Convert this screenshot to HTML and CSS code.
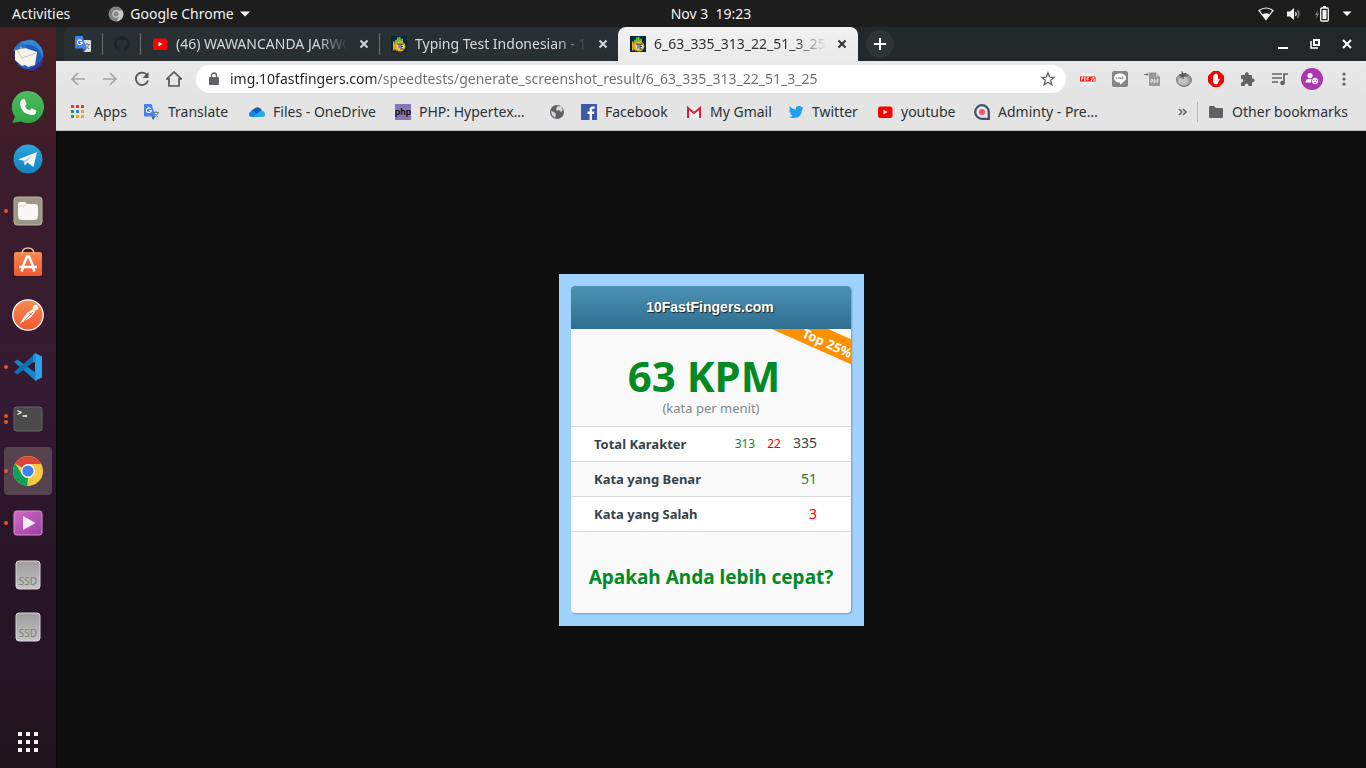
FILE: index.html
```html
<!DOCTYPE html>
<html lang="id">
<head>
<meta charset="utf-8">
<title>6_63_335_313_22_51_3_25</title>
<link rel="stylesheet" href="styles.css">
</head>
<body>
<svg class="defs" aria-hidden="true">
  <defs>
    <linearGradient id="gWa" x1="0" y1="0" x2="0" y2="1"><stop offset="0" stop-color="#4fbd60"/><stop offset="1" stop-color="#2fa547"/></linearGradient>
    <linearGradient id="gTg" x1="0" y1="0" x2="0" y2="1"><stop offset="0" stop-color="#2aa6df"/><stop offset="1" stop-color="#1580bd"/></linearGradient>
    <linearGradient id="gOr" x1="0" y1="0" x2="0" y2="1"><stop offset="0" stop-color="#f58a52"/><stop offset="1" stop-color="#f2582f"/></linearGradient>
    <linearGradient id="gVid" x1="0" y1="0" x2="1" y2="1"><stop offset="0" stop-color="#d06bc4"/><stop offset="1" stop-color="#9b3fa6"/></linearGradient>
    <linearGradient id="gSsd" x1="0" y1="0" x2="0" y2="1"><stop offset="0" stop-color="#9d9d9d"/><stop offset="1" stop-color="#c4c4c4"/></linearGradient>
    <symbol id="translate" viewBox="0 0 16 16">
      <path d="M6 4h9a1 1 0 0 1 1 1v10a1 1 0 0 1-1 1H9z" fill="#d9dde2"/>
      <path d="M9 8.500h6M12 7v1.500M14 8.500c-.5 2-2 3.500-4 4.500M10.500 9.500c.8 1.500 2 2.500 3.500 3.300" stroke="#72808a" fill="none"/>
      <path d="M1 0h6.500l3.800 12.500H1a1 1 0 0 1-1-1V1a1 1 0 0 1 1-1z" fill="#4382ee"/>
      <path d="M7.500 12.500h3.800L9 16z" fill="#2859b8"/>
      <path d="M6.700 4.800A2.400 2.400 0 1 0 7.200 6.500H5" stroke="#fff" stroke-width="1.200" fill="none"/>
    </symbol>
    <symbol id="youtube" viewBox="0 0 16 16"><rect x="1" y="2.500" width="14.500" height="11.500" rx="2.500" fill="#f00"/><path d="M6.500 5.800v4.600l4-2.300z" fill="#fff"/></symbol>
    <symbol id="fingers" viewBox="0 0 16 16">
      <path fill="#04283c" d="M0 0h16v16H0z"/>
      <path d="M4 8V4l1.500-.5L6 5V1.500L7.500 1 8 4V.8L9.500 1l.3 3 1-1.500 1.200.5V8z" fill="#71bd35"/>
      <path d="M2.800 5.500v9M3 11l2.500-4M3 10.500l3 4" stroke="#f4a60b" stroke-width="1.600" fill="none"/>
      <circle cx="9.300" cy="10.300" r="4.400" fill="#dce6dd" stroke="#eda412" stroke-width="1.500"/>
      <path d="M6 8h6.500M8 8v4.500M11.500 8.500H10V13h2.500M10 10.500h2" stroke="#34403c" stroke-width="1.100" fill="none"/>
    </symbol>
    <symbol id="close" viewBox="0 0 16 16"><path d="M4.500 4.500l7 7M11.500 4.500l-7 7" stroke="currentColor" stroke-width="2"/></symbol>
    <symbol id="ssd" viewBox="0 0 32 32"><rect x="4" y="2" width="24" height="28" rx="3" fill="url(#gSsd)" stroke="#d7d7d7"/><text x="16" y="26" text-anchor="middle" class="ssd-text">SSD</text></symbol>
  </defs>
</svg>

<header class="panel">
  <div class="panel-left">
    <button class="plain">Activities</button>
    <button class="plain app-menu">
      <svg width="16" height="16" viewBox="0 0 16 16"><circle cx="8" cy="8" r="7.500" fill="#858585"/><path d="M8 4.500h6.500A7.500 7.500 0 0 1 8.500 15.500L11.200 10z" fill="#c7c7c7"/><path d="M1.500 4.500L5 10l3.500 1.500" stroke="#666" fill="none"/><circle cx="8" cy="8" r="3.300" fill="#8b8b8b" stroke="#ddd"/></svg>
      <span>Google Chrome</span>
      <svg width="10" height="6" viewBox="0 0 10 6"><path d="M0 .5h10L5 5.500z" fill="#fff"/></svg>
    </button>
  </div>
  <button class="plain clock">Nov 3&nbsp; 19:23</button>
  <button class="plain tray" aria-label="System menu">
    <svg width="16" height="16" viewBox="0 0 16 16"><path d="M1 4.500Q8-.5 15 4.500L8 13.500z" fill="none" stroke="#f2f2f2" stroke-width="1.200"/><path d="M4.300 8.500Q8 6 11.700 8.500L8 14z" fill="#f2f2f2"/></svg>
    <svg width="16" height="16" viewBox="0 0 16 16"><path d="M1 5.500h3L8 2v12l-4-3.500H1z" fill="#f2f2f2"/><path d="M9.500 6q1.500 2 0 4" stroke="#f2f2f2" fill="none" stroke-width="1.300"/><path d="M11.500 4q3 4 0 8" stroke="#888" fill="none" stroke-width="1.300"/></svg>
    <svg width="16" height="16" viewBox="0 0 16 16"><path d="M4 4L1 9h2l-1 4 3-5.500H3z" fill="#888"/><rect x="6.700" y="2" width="7.600" height="13" rx="1" fill="none" stroke="#f2f2f2" stroke-width="1.300"/><path d="M9 0h3v2H9zM8.500 4h4v9h-4z" fill="#f2f2f2"/></svg>
    <svg width="10" height="6" viewBox="0 0 10 6"><path d="M.5.500h9L5 5z" fill="#fff"/></svg>
  </button>
</header>

<div class="desktop">
  <nav class="dock" aria-label="Dock">
    <button class="dock-item" aria-label="Thunderbird"><svg viewBox="0 0 32 32"><circle cx="17" cy="16" r="14.500" fill="#1d5fb8"/><path d="M1 12Q6 2 14 1.500 22-1 27 6q5 5 4 13l-4-8Q20 4 9 6z" fill="#3585d2"/><path d="M23 27q7-4 8.300-11Q32 27 22 31.500l-7-.5z" fill="#34349c"/><path d="M3 11l6-4 7 3 9 3-2 13-7 2-3-2-3 1-7-6z" fill="#f6f4ea"/><path d="M5 11l5 8 14-5" stroke="#c8c5b6" fill="none"/><path d="M1 12Q4 5 11 4l4 5-7 1z" fill="#2874c5"/><circle cx="9" cy="9" r="1.300" fill="#e4a12c"/></svg></button>
    <button class="dock-item" aria-label="WhatsApp"><svg viewBox="0 0 32 32"><path d="M16 0a16 16 0 1 1-7 30.400L.4 32 3 25.500A16 16 0 0 1 16 0z" fill="url(#gWa)"/><path d="M10 8.500l2.500-.5 2.200 5-1.800 2.200q1.500 3 4.800 4.300l2-2.200 4.700 2.300q-.2 4.500-4.500 4.500Q9 22.500 8 13q0-3 2-4.500z" fill="#fff"/></svg></button>
    <button class="dock-item" aria-label="Telegram"><svg viewBox="0 0 32 32"><circle cx="16" cy="16" r="14.500" fill="url(#gTg)"/><path d="M6 16.500L25 9l-3.500 15-6-4.500-3 3-.8-4.800z" fill="#f4f9fc"/><path d="M11.700 17.700L22 11.500l-8.500 8-1 3z" fill="#b3cfe2"/></svg></button>
    <button class="dock-item run" aria-label="Files"><svg viewBox="0 0 32 32"><rect x="2" y="2" width="28" height="28" rx="3" fill="#9e9785" stroke="#bdb6a4"/><path d="M8 7h5l2 2h8q3 0 3 3v9q0 4-4 4H10q-4 0-4-4V9q0-2 2-2z" fill="#f8f7f4"/><path d="M6.500 11H12l3-2.500" stroke="#d5d1c9" fill="none"/></svg></button>
    <button class="dock-item" aria-label="Ubuntu Software"><svg viewBox="0 0 32 32"><rect x="2" y="5" width="28" height="24" rx="2" fill="url(#gOr)"/><path d="M10 7Q10 1 16 1t6 6" stroke="#e5c596" stroke-width="1.500" fill="none"/><path d="M10 21.500l5-12h2l5 12M7 20h18M9.500 24.500l1.500-4M22.500 24.500l-1.500-4" stroke="#fff" stroke-width="2.500" fill="none"/></svg></button>
    <button class="dock-item" aria-label="Postman"><svg viewBox="0 0 32 32"><circle cx="16" cy="16" r="15.200" fill="url(#gOr)" stroke="#fff" stroke-width="1.300"/><circle cx="23.500" cy="8.500" r="2.800" fill="#fff"/><path d="M21 10l2.500 2.500L18 19l-4 2-6.500 4 4.500-7 3-4z" fill="#fff"/><path d="M21 13l-9 9M17 14l3 2" stroke="#f0643a" stroke-width=".8"/></svg></button>
    <button class="dock-item run" aria-label="Visual Studio Code"><svg viewBox="0 0 32 32"><path d="M2 11l3.500-2.500L24 22v8z" fill="#1684cc"/><path d="M2 21l3.500 2.500L24 9V2z" fill="#0e70b4"/><path d="M23 2l7 3.500v21L23 30z" fill="#2ba3ec"/><path d="M23 2l1 8-3 2V4zM21 20l3 2-1 8z" fill="#1a8bd4"/></svg></button>
    <button class="dock-item run two" aria-label="Terminal"><svg viewBox="0 0 32 32"><rect x="2" y="4" width="28" height="24" rx="2.500" fill="#4a4a4a" stroke="#666"/><path d="M5.500 7.500l3.500 2-3.500 2M10.500 13H15" stroke="#fff" stroke-width="1.300" fill="none"/></svg></button>
    <button class="dock-item run active" aria-label="Google Chrome"><svg viewBox="0 0 32 32"><circle cx="16" cy="16" r="15" fill="#fbca43"/><path d="M16 16L3 8.500A15 15 0 0 1 29 9z" fill="#dc4437"/><path d="M3 8.500A15 15 0 0 0 15 31l7-11-12-1z" fill="#11a05a"/><path d="M15 31l7.500-12L29 9H16v14z" fill="#fbca43"/><circle cx="16" cy="16" r="7" fill="#fff"/><circle cx="16" cy="16" r="5.600" fill="#3f82f1"/></svg></button>
    <button class="dock-item run" aria-label="Videos"><svg viewBox="0 0 32 32"><rect x="2" y="4" width="28" height="24" rx="2.500" fill="url(#gVid)" stroke="#df93d6"/><path d="M11 9v14l12.500-7z" fill="#f8edf7"/></svg></button>
    <button class="dock-item" aria-label="SSD volume 1"><svg><use href="#ssd"/></svg></button>
    <button class="dock-item" aria-label="SSD volume 2"><svg><use href="#ssd"/></svg></button>
    <button class="dock-item show-apps" aria-label="Show Applications"><svg viewBox="0 0 32 32"><path d="M6 6h4v4H6zM14 6h4v4h-4zM22 6h4v4h-4zM6 14h4v4H6zM14 14h4v4h-4zM22 14h4v4h-4zM6 22h4v4H6zM14 22h4v4h-4zM22 22h4v4h-4z" fill="#f4f2f3"/></svg></button>
  </nav>

  <div class="window">
    <div class="tabstrip">
      <div class="tab pinned" aria-label="Translate"><svg class="i16"><use href="#translate"/></svg></div>
      <div class="tab pinned" aria-label="GitHub"><svg class="i16" viewBox="0 0 16 16"><path d="M8 0a8 8 0 0 0-2.500 15.600c.4 0 .5-.2.500-.4v-1.500c-2.200.5-2.700-1-2.700-1-.4-.9-.9-1.200-.9-1.200-.7-.5.100-.5.100-.5.800.1 1.200.8 1.200.8.700 1.300 1.900.9 2.300.7.100-.5.300-.9.500-1.100-1.800-.2-3.600-.9-3.600-4 0-.9.300-1.600.8-2.100-.1-.2-.4-1 .1-2.100 0 0 .7-.2 2.200.8a8 8 0 0 1 4 0c1.500-1 2.200-.8 2.200-.8.400 1.100.2 1.900.1 2.100.5.600.8 1.300.8 2.100 0 3.100-1.900 3.800-3.700 4 .3.300.6.800.6 1.500v2.200c0 .2.100.5.500.4A8 8 0 0 0 8 0z" fill="#1e2429"/></svg></div>
      <div class="tab"><svg class="i16"><use href="#youtube"/></svg><span class="title">(46) WAWANCANDA JARWO KWAT</span><button class="plain x" aria-label="Close tab"><svg class="i16"><use href="#close"/></svg></button></div>
      <div class="tab"><svg class="i16"><use href="#fingers"/></svg><span class="title">Typing Test Indonesian - 10FastFingers</span><button class="plain x" aria-label="Close tab"><svg class="i16"><use href="#close"/></svg></button></div>
      <div class="tab current"><svg class="i16"><use href="#fingers"/></svg><span class="title">6_63_335_313_22_51_3_25</span><button class="plain x" aria-label="Close tab"><svg class="i16"><use href="#close"/></svg></button></div>
      <button class="plain new-tab" aria-label="New tab"><svg width="12" height="12" viewBox="0 0 12 12"><path d="M6 0v12M0 6h12" stroke="#fff" stroke-width="2"/></svg></button>
      <div class="win-controls">
        <button class="plain" aria-label="Minimize"><svg class="i16" viewBox="0 0 16 16"><path d="M3 12h10" stroke="#fff" stroke-width="2"/></svg></button>
        <button class="plain" aria-label="Restore"><svg class="i16" viewBox="0 0 16 16"><path d="M7 4h5v5H7z" stroke="#fff" stroke-width="2" fill="none"/><path d="M4 5v7h7" stroke="#fff" stroke-width="1.500" fill="none"/></svg></button>
        <button class="plain" aria-label="Close window"><svg class="i16" viewBox="0 0 16 16"><path d="M4 4l8 8M12 4l-8 8" stroke="#fff" stroke-width="2"/></svg></button>
      </div>
    </div>

    <div class="toolbar">
      <button class="plain tool dim" aria-label="Back"><svg class="i16" viewBox="0 0 16 16"><path d="M15 8H2M8 2L2 8l6 6" stroke="currentColor" stroke-width="1.700" fill="none"/></svg></button>
      <button class="plain tool dim" aria-label="Forward"><svg class="i16" viewBox="0 0 16 16"><path d="M1 8h13M8 2l6 6-6 6" stroke="currentColor" stroke-width="1.700" fill="none"/></svg></button>
      <button class="plain tool" aria-label="Reload"><svg class="i16" viewBox="0 0 16 16"><path d="M13 4A6.200 6.200 0 1 0 14 9.500" stroke="currentColor" stroke-width="1.800" fill="none"/><path d="M14.500 1v6h-6z" fill="currentColor"/></svg></button>
      <button class="plain tool" aria-label="Home"><svg class="i16" viewBox="0 0 16 16"><path d="M.8 8L8 1l7.200 7H13v7H3V8z" stroke="currentColor" stroke-width="1.700" fill="none"/></svg></button>
      <div class="omnibox">
        <svg width="10" height="14" viewBox="0 0 10 14"><path d="M1 5h8a1 1 0 0 1 1 1v6a1 1 0 0 1-1 1H1a1 1 0 0 1-1-1V6a1 1 0 0 1 1-1z" fill="#5f6368"/><path d="M2.500 6V3.500a2.500 2.500 0 0 1 5 0V6" stroke="#5f6368" stroke-width="1.400" fill="none"/></svg>
        <input class="url" type="text" aria-label="Address" value="img.10fastfingers.com/speedtests/generate_screenshot_result/6_63_335_313_22_51_3_25">
        <button class="plain" aria-label="Bookmark this page"><svg class="i16" viewBox="0 0 16 16"><path d="M8 1.800l1.700 4.300 4.500.3-3.500 2.900 1.200 4.500L8 11.300l-3.900 2.500 1.200-4.500-3.500-2.900 4.500-.3z" stroke="#5f6368" stroke-width="1.300" fill="none"/></svg></button>
      </div>
      <div class="extensions">
        <button class="plain tool" aria-label="PDF JS"><svg class="i16" viewBox="0 0 16 16"><path d="M1 1l6 1 7-1v13l-5 1-8-1z" fill="#f3f3f3" stroke="#d8d8d8" stroke-width=".6"/><path fill="#ed1b12" d="M0 5.500h15.500v5H0z"/><path d="M1.500 9.500v-3H3v1.500H1.500M4.500 6.500h1l.5.500v2l-.5.500h-1zM7.500 9.500v-3H9M7.500 8H9M12 6.500v3h-1.500M14.500 6.500H13V8h1.500v1.500H13" stroke="#fff" stroke-width=".7" fill="none"/></svg></button>
        <button class="plain tool" aria-label="LINE"><svg class="i16" viewBox="0 0 16 16"><rect width="16" height="16" rx="2" fill="#858585"/><path d="M8 2.500c4 0 6 2 6 4.500s-3 4.500-6 6.800v-2.200c-4 0-6-2-6-4.600s2-4.500 6-4.500z" fill="#fff"/><path d="M4.300 6v2h1M6.500 6v2M7.700 8V6l1.200 2V6M11.500 6H10v2h1.500M10 7h1.500" stroke="#777" stroke-width=".6" fill="none"/></svg></button>
        <button class="plain tool" aria-label="Save to PDF"><svg class="i16" viewBox="0 0 16 16"><path d="M5 1.500h7l4 4V15H5z" fill="#999"/><path d="M12 1.500v4h4z" fill="#ccc"/><path d="M0 3.500h4M2.500 2l1.500 1.500L2.500 5" stroke="#777" fill="none"/><path d="M7 12V8.500h1.500v2H7M10 8.500v3.500l1.300-1V9zM13 12V8.500h1.500M13 10h1.500" stroke="#f0f0f0" stroke-width=".8" fill="none"/></svg></button>
        <button class="plain tool" aria-label="Tomato timer"><svg class="i16" viewBox="0 0 16 16"><ellipse cx="8" cy="9" rx="7.400" ry="6.400" fill="#a2a2a2" stroke="#6e6e6e"/><ellipse cx="7" cy="10" rx="5" ry="4" fill="#c0c0c0"/><path d="M3 4l4 .5L6 .5M7 4.500l3-2M7 4.500l5 .5M7 4.500V8M7 4.500L4.500 6.500" stroke="#505050" stroke-width="1.100" fill="none"/></svg></button>
        <button class="plain tool" aria-label="AdBlock"><svg class="i16" viewBox="0 0 16 16"><path d="M5 0h6l5 5v6l-5 5H5l-5-5V5z" fill="#f50000"/><path d="M5 8V4.500h1.200V7 3h1.300v4-4.500h1.300V7 3.500H10v5l1-1 1 .5-2 4-1 1.200H6.500L5 11z" fill="#fff"/></svg></button>
        <button class="plain tool" aria-label="Extensions"><svg class="i16" viewBox="0 0 16 16"><path d="M1 4h4C4 1 8.500 0 8.800 3v1H12v3.500c3.500-.5 3.500 4 0 3.700V15H8.500c.3-3.500-4-3.500-3.700 0H1v-3.500c3-.2 3-4 0-3.800z" fill="#5f6368"/></svg></button>
        <button class="plain tool" aria-label="Media controls"><svg class="i16" viewBox="0 0 16 16"><path d="M0 3h10M0 7h10M0 11h6" stroke="#5f6368" stroke-width="1.600"/><circle cx="10.500" cy="12" r="2.300" fill="#5f6368"/><path d="M12 12V3h4" stroke="#5f6368" stroke-width="1.700" fill="none"/></svg></button>
        <button class="plain tool" aria-label="Profile"><svg width="22" height="22" viewBox="0 0 22 22"><circle cx="11" cy="11" r="11" fill="#ae35b0"/><circle cx="9" cy="7.500" r="2.600" fill="#fff"/><path d="M4.500 14.500c0-5 6-4 6.500-3l-1 3z" fill="#fff"/><circle cx="14" cy="13" r="3.500" fill="#fff" stroke="#ae35b0" stroke-width=".8"/><path d="M12.300 12.500h1.200M14.800 12.500H16M12.800 14.300q1.200.6 2.400 0" stroke="#ae35b0" stroke-width=".7" fill="none"/></svg></button>
        <button class="plain tool" aria-label="Menu"><svg class="i16" viewBox="0 0 16 16"><g fill="#5f6368"><circle cx="8" cy="3" r="1.600"/><circle cx="8" cy="8" r="1.600"/><circle cx="8" cy="13" r="1.600"/></g></svg></button>
      </div>
    </div>

    <nav class="bookmarks" aria-label="Bookmarks">
      <a href="#"><svg class="i16" viewBox="0 0 16 16"><path d="M1 1h3v3H1zM6 1h3v3H6zM11 1h3v3h-3z" fill="#ee3a2c"/><path d="M1 6h3v3H1zM1 11h3v3H1z" fill="#19a34b"/><path d="M6 6h3v3H6z" fill="#2f80ed"/><path d="M11 6h3v3h-3zM6 11h3v3H6zM11 11h3v3h-3z" fill="#f4a412"/></svg>Apps</a>
      <a href="#"><svg class="i16"><use href="#translate"/></svg>Translate</a>
      <a href="#"><svg class="i16" viewBox="0 0 16 16"><path d="M2 8a4 4 0 0 1 3-3 4.500 4.500 0 0 1 8 2l-5 4z" fill="#0b5fb5"/><path d="M0 10.500Q0 7 4 7l8 6H3q-3 0-3-2.500z" fill="#1684dc"/><path d="M4 13l7-6q5-1 5 3.500 0 2.500-3 2.500z" fill="#28a8ea"/></svg>Files - OneDrive</a>
      <a href="#"><svg class="i16" viewBox="0 0 16 16"><path fill="#8577ba" d="M0 0h16v16H0z"/><text x="8" y="11" text-anchor="middle" class="php-text">php</text></svg>PHP: Hypertex…</a>
      <a href="#" aria-label="Website"><svg class="i16" viewBox="0 0 16 16"><circle cx="8" cy="8" r="7" fill="#5f6368"/><path d="M8 2.500l4-.5 2 4-2 2-2-2-2 1-1-2zM2 7l3 1 2 2-1 4-3-3z" fill="#d7d8d9"/></svg></a>
      <a href="#"><svg class="i16" viewBox="0 0 16 16"><path fill="#3c5aa6" d="M0 0h16v16H0z"/><path d="M11 16V10h2l.4-2.400H11V6q0-1.200 1.300-1.200h1.300V2.600q-5-.8-5 3V7.600H6.500V10h2.100v6z" fill="#fff"/></svg>Facebook</a>
      <a href="#"><svg class="i16" viewBox="0 0 16 16"><path d="M1 3h14v11H1z" fill="#f2f2f2"/><path d="M2 14V4l6 5 6-5v10" stroke="#dc2338" stroke-width="2" fill="none"/></svg>My Gmail</a>
      <a href="#"><svg class="i16" viewBox="0 0 16 16"><path d="M15.500 3.500l-1.500 2Q14 14 5.500 14 3 14 .8 12.700q2.600 0 4-1.300-2.300-.3-2.800-2.200h1.300Q1 8.300 1 6l1.300.4Q.5 4.500 1.700 2.200q2.600 3 6.200 3.200Q7.500 2 11 2q1.500 0 2.200 1z" fill="#1da1f2"/></svg>Twitter</a>
      <a href="#"><svg class="i16"><use href="#youtube"/></svg>youtube</a>
      <a href="#"><svg class="i16" viewBox="0 0 16 16"><path d="M8 1.200A6.800 6.800 0 1 0 8 14.800h6.800V8A6.800 6.800 0 0 0 8 1.200z" fill="#e6e8ea" stroke="#44536a" stroke-width="2.300"/><circle cx="8" cy="8" r="3" fill="#f2555d"/></svg>Adminty - Pre…</a>
      <button class="plain more" aria-label="More bookmarks"><svg width="10" height="8" viewBox="0 0 10 8"><path d="M1 1l3 3-3 3M5 1l3 3-3 3" stroke="#5f6368" stroke-width="1.500" fill="none"/></svg></button>
      <a href="#" class="other"><svg class="i16" viewBox="0 0 16 16"><path d="M1 3q0-1 1-1h4l2 2h6q1 0 1 1v8q0 1-1 1H2q-1 0-1-1z" fill="#5f6368"/></svg>Other bookmarks</a>
    </nav>

    <main class="page">
      <section class="frame">
        <div class="card">
          <h1 class="brand">10FastFingers.com</h1>
          <div class="score">
            <div class="ribbon">Top 25%</div>
            <p class="kpm">63 KPM</p>
            <p class="unit">(kata per menit)</p>
          </div>
          <table class="stats">
            <tr><th scope="row">Total Karakter</th><td><span class="good small">313</span><span class="bad small">22</span><span>335</span></td></tr>
            <tr><th scope="row">Kata yang Benar</th><td><span class="good">51</span></td></tr>
            <tr><th scope="row">Kata yang Salah</th><td><span class="bad">3</span></td></tr>
          </table>
          <p class="challenge">Apakah Anda lebih cepat?</p>
        </div>
      </section>
    </main>
  </div>
</div>
</body>
</html>
```

FILE: styles.css
```css
* { box-sizing: border-box; }

body {
  margin: 0;
  min-height: 100vh;
  display: flex;
  flex-direction: column;
  background: #0e0e0e;
  color: #2c3236;
  font: 14px/20px "Noto Sans", "Open Sans", sans-serif;
}

svg { display: block; flex: none; }
p, h1 { margin: 0; }
.defs { position: absolute; width: 0; height: 0; }
.i16 { width: 16px; height: 16px; }
.ssd-text { font: 10px "Noto Sans", sans-serif; fill: #7d7d7d; }
.php-text { font: bold 9px "Liberation Sans", sans-serif; fill: #111; }

.plain {
  margin: 0;
  padding: 0;
  border: 0;
  background: none;
  color: inherit;
  font: inherit;
  display: flex;
  align-items: center;
}

/* Top panel */
.panel {
  height: 27px;
  padding: 0 14px 0 12px;
  display: grid;
  grid-template-columns: 1fr auto 1fr;
  align-items: center;
  background: #1d1d1d;
  color: #f2f2f2;
}
.panel-left { display: flex; gap: 38px; }
.app-menu { gap: 6px; }
.clock { padding-left: 58px; }
.tray { justify-self: end; gap: 12px; }

/* Dock */
.desktop { flex: 1; display: flex; }
.dock {
  width: 56px;
  flex: none;
  padding-top: 2px;
  display: flex;
  flex-direction: column;
  align-items: center;
  background: linear-gradient(#4a2024, #3b1c2c 20%, #341a32 50%, #281426 75%, #21141d);
}
.dock-item {
  width: 48px;
  height: 48px;
  margin: 2px 0;
  padding: 8px;
  border: 0;
  border-radius: 4px;
  background: none;
  position: relative;
}
.dock-item svg { width: 32px; height: 32px; }
.dock-item.active { background: #56414f; }
.dock-item.run::before {
  content: "";
  position: absolute;
  left: 0;
  top: 22px;
  width: 4px;
  height: 4px;
  border-radius: 50%;
  background: #e95420;
}
.dock-item.two::before { top: 19px; box-shadow: 0 6px #e95420; }
.show-apps { margin-top: auto; }

/* Browser window */
.window { flex: 1; min-width: 0; display: flex; flex-direction: column; }

.tabstrip {
  height: 34px;
  padding: 0 11px 0 8px;
  display: flex;
  background: #22272a;
  color: #d5d9dc;
}
.tab {
  flex: 0 1 239px;
  min-width: 0;
  padding: 0 7px 0 11px;
  display: flex;
  align-items: center;
  gap: 8px;
  background: #293033;
  border-right: 1px solid #5a6164;
  border-image: linear-gradient(transparent 20%, #6b7173 20%, #6b7173 80%, transparent 80%) 1;
}
.tab.pinned { flex: none; width: 39px; }
.tab.pinned:first-child { border-radius: 8px 0 0; }
.tab.pinned + .tab.pinned { width: 38px; }
.tab:not(.current):has(+ .current) {
  flex-basis: 238px;
  padding-right: 6px;
  border-color: transparent;
  border-image: none;
  border-radius: 0 0 8px;
}
.title {
  flex: 1;
  overflow: hidden;
  white-space: nowrap;
  mask-image: linear-gradient(to right, #000 82%, transparent);
}
.tab.current {
  flex-basis: 240px;
  padding: 0 8px 0 12px;
  border: 0;
  border-radius: 8px 8px 0 0;
  background: linear-gradient(#f2f2f2, #e9e9e9);
  color: #2c3236;
}
.x { color: inherit; }
.new-tab {
  width: 28px;
  height: 28px;
  margin: 3px 8px;
  justify-content: center;
  border-radius: 50%;
  background: #2d3437;
}
.win-controls { margin-left: auto; display: flex; gap: 16px; }

.toolbar {
  height: 36px;
  padding: 0 6px;
  display: flex;
  align-items: center;
  background: linear-gradient(#e9e9e9, #e4e4e4);
  color: #53575b;
}
.tool { width: 32px; height: 32px; justify-content: center; }
.dim { color: #a6a6a6; }
.omnibox {
  flex: 1;
  height: 28px;
  margin: 0 6px;
  padding: 0 10px 0 13px;
  display: flex;
  align-items: center;
  gap: 11px;
  border-radius: 14px;
  background: #fff;
}
.url {
  flex: 1;
  min-width: 0;
  padding: 0;
  border: 0;
  outline: 0;
  font: inherit;
  color: transparent;
  background: linear-gradient(to right, #202427 146px, #6b6f72 146px);
  -webkit-background-clip: text;
  background-clip: text;
}
.extensions { display: flex; }

.bookmarks {
  height: 34px;
  padding: 0 14px 4px;
  display: grid;
  grid-template-columns: 74px 105px 146px 154px 32px 105px 102px 89px 97px 130px 1fr auto;
  align-items: center;
  background: #e4e4e4;
  border-bottom: 1px solid #b9b9b9;
}
.bookmarks a {
  display: flex;
  align-items: center;
  gap: 8px;
  color: inherit;
  text-decoration: none;
  white-space: nowrap;
}
.more { justify-self: end; margin-right: 9px; }
.bookmarks .other { padding: 0 4px 0 10px; border-left: 1px solid #b4b4b4; }

/* Result card */
.page {
  flex: 1;
  display: flex;
  align-items: center;
  justify-content: center;
  border-left: 1px solid #0a0a06;
}
.frame { width: 305px; padding: 12px 13px 13px 12px; background: #a0d2ff; }
.card {
  overflow: hidden;
  border-radius: 4px;
  background: #f9f9f9;
  box-shadow: 1px 1px 2px #6f9cc2;
  color: #35434b;
}
.brand {
  padding: 11px 2px 12px 0;
  background: linear-gradient(#4c91b5, #2e6e90);
  color: #fff;
  font: bold 14px/20px "Liberation Sans", Arial, sans-serif;
  text-align: center;
  text-shadow: 1px 1px 1px #222;
}
.score {
  position: relative;
  overflow: hidden;
  padding: 23px 0 9px;
  text-align: center;
}
.kpm {
  padding-right: 14px;
  color: #048a24;
  font-size: 42px;
  line-height: 48px;
  font-weight: bold;
}
.unit { color: #7e898e; font-size: 13px; line-height: 17px; }
.ribbon {
  position: absolute;
  top: 1px;
  right: -57px;
  width: 160px;
  padding-top: 4px;
  background: #ff9000;
  box-shadow: 0 -12px #fff;
  color: #fff;
  font-size: 13px;
  font-weight: bold;
  line-height: 19px;
  transform: rotate(24deg);
}
.stats { width: 100%; border-collapse: collapse; border-bottom: 1px solid #d9d9d9; }
.stats tr { height: 35px; border-top: 1px solid #d9d9d9; }
.stats tr:nth-child(odd) { background: #fff; }
.stats th { padding: 0 0 0 23px; text-align: left; font-size: 13px; }
.stats td { padding: 0 34px 0 0; text-align: right; font-size: 14px; }
.stats td span + span { margin-left: 12px; }
.stats .small { font-size: 12px; }
.good { color: #1c7f37; }
.bad { color: #f00000; }
.challenge {
  padding: 33px 0 24px;
  color: #048a24;
  font-size: 19px;
  line-height: 24px;
  font-weight: bold;
  text-align: center;
}
```
